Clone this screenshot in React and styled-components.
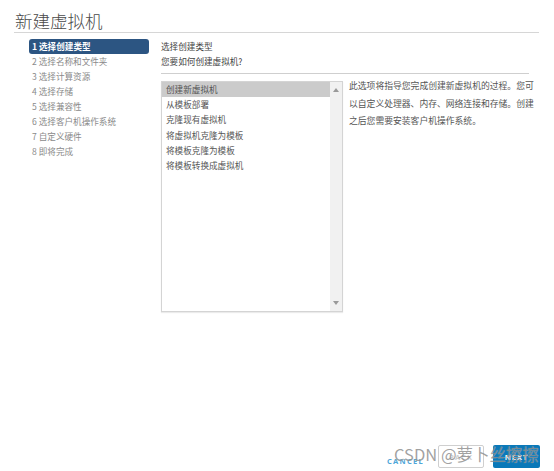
import React from "react";
import styled, { createGlobalStyle } from "styled-components";

const Global = createGlobalStyle`
  html, body { margin: 0; padding: 0; background: #fff; }
  body {
    font-family: "Noto Sans CJK SC", "Noto Sans", sans-serif;
    width: 554px; height: 471px; overflow: hidden;
  }
`;

const Page = styled.div`
  position: relative;
  width: 554px;
  height: 471px;
  box-sizing: border-box;
  padding: 9px 15px 0 14px;
  display: flex;
  flex-direction: column;
`;

const Title = styled.h1`
  margin: 0;
  padding: 0 0 0 1px;
  font-size: 17.5px;
  font-weight: 300;
  line-height: 23px;
  color: #4a4a4a;
  border-bottom: 1px solid #d6d6d6;
`;

const Body = styled.div`
  display: flex;
  padding-top: 6px;
  flex: 1;
`;

const Nav = styled.div`
  width: 120px;
  margin-left: 15px;
  display: flex;
  flex-direction: column;
`;

const NavItem = styled.div`
  height: 15px;
  line-height: 15px;
  padding-left: 3px;
  font-size: 8.6px;
  border-radius: 3px;
  color: ${(p) => (p.$active ? "#fff" : "#8a8a8a")};
  font-weight: ${(p) => (p.$active ? 700 : 400)};
  background: ${(p) => (p.$active ? "#2c5582" : "transparent")};
  white-space: nowrap;
`;

const Content = styled.div`
  margin-left: 12px;
  flex: 1;
  display: flex;
  flex-direction: column;
`;

const Header = styled.div`
  width: 368px;
  border-bottom: 1px solid #cfcfcf;
  padding-bottom: 4px;
`;

const HeadLine = styled.div`
  font-size: 8.6px;
  line-height: 15px;
  color: #444;
`;

const Row = styled.div`
  display: flex;
  margin-top: 7px;
`;

const ListBox = styled.div`
  width: 180px;
  height: 229px;
  border: 1px solid #d4d4d4;
  box-shadow: 0 1px 1px rgba(0, 0, 0, 0.08);
  display: flex;
`;

const Options = styled.div`
  flex: 1;
  display: flex;
  flex-direction: column;
`;

const Option = styled.div`
  height: 15.2px;
  line-height: 15.2px;
  padding-left: 4px;
  font-size: 8.6px;
  color: #555;
  background: ${(p) => (p.$selected ? "#cbcbcb" : "transparent")};
  white-space: nowrap;
`;

const Scroll = styled.div`
  width: 12px;
  background: #f1f1f1;
  display: flex;
  flex-direction: column;
  justify-content: space-between;
  align-items: center;
  padding: 6px 0 6px;
`;

const Description = styled.div`
  width: 190px;
  margin-left: 6px;
  margin-top: -4px;
  font-size: 8.8px;
  line-height: 17.5px;
  color: #555;
`;

const Footer = styled.div`
  position: absolute;
  right: 14px;
  bottom: 3px;
  display: flex;
  align-items: center;
  gap: 8px;
`;

const CancelBtn = styled.div`
  font-size: 7.5px;
  font-weight: 700;
  letter-spacing: 1.3px;
  color: #4fa6d9;
  padding: 8px 6px 0 0;
  font-family: "Noto Sans", sans-serif;
`;

const OutlineBtn = styled.div`
  width: 44px;
  height: 21px;
  border: 1px solid #cfcfcf;
  border-radius: 2px;
  display: flex;
  align-items: center;
  justify-content: center;
  font-size: 7.5px;
  font-weight: 700;
  letter-spacing: 1px;
  color: #d0d0d0;
  font-family: "Noto Sans", sans-serif;
  margin-right: 1px;
`;

const PrimaryBtn = styled.div`
  width: 47px;
  height: 23px;
  border-radius: 2px;
  background: #0a78b8;
  display: flex;
  align-items: center;
  justify-content: center;
  font-size: 7.5px;
  font-weight: 700;
  letter-spacing: 1px;
  color: #fff;
  font-family: "Noto Sans", sans-serif;
`;

const Watermark = styled.div`
  position: absolute;
  left: 394px;
  top: 442px;
  font-size: 16.5px;
  line-height: 24px;
  color: rgba(130, 130, 130, 0.75);
  text-shadow: 0 0 1px rgba(255, 255, 255, 0.4);
  font-family: "Noto Sans CJK SC", "Noto Sans", sans-serif;
  white-space: nowrap;
  pointer-events: none;
`;

const Arrow = ({ up }) => (
  <svg width="6" height="4" viewBox="0 0 6 4">
    <path d={up ? "M0 4 L3 0 L6 4 Z" : "M0 0 L6 0 L3 4 Z"} fill="#9a9a9a" />
  </svg>
);

const steps = [
  "1 选择创建类型",
  "2 选择名称和文件夹",
  "3 选择计算资源",
  "4 选择存储",
  "5 选择兼容性",
  "6 选择客户机操作系统",
  "7 自定义硬件",
  "8 即将完成",
];

const options = [
  "创建新虚拟机",
  "从模板部署",
  "克隆现有虚拟机",
  "将虚拟机克隆为模板",
  "将模板克隆为模板",
  "将模板转换成虚拟机",
];

export default function App() {
  return (
    <>
      <Global />
      <Page>
        <Title>新建虚拟机</Title>
        <Body>
          <Nav>
            {steps.map((s, i) => (
              <NavItem key={s} $active={i === 0}>
                {s}
              </NavItem>
            ))}
          </Nav>
          <Content>
            <Header>
              <HeadLine>选择创建类型</HeadLine>
              <HeadLine>您要如何创建虚拟机?</HeadLine>
            </Header>
            <Row>
              <ListBox>
                <Options>
                  {options.map((o, i) => (
                    <Option key={o} $selected={i === 0}>
                      {o}
                    </Option>
                  ))}
                </Options>
                <Scroll>
                  <Arrow up />
                  <Arrow />
                </Scroll>
              </ListBox>
              <Description>
                此选项将指导您完成创建新虚拟机的过程。您可以自定义处理器、内存、网络连接和存储。创建之后您需要安装客户机操作系统。
              </Description>
            </Row>
          </Content>
        </Body>
        <Footer>
          <CancelBtn>CANCEL</CancelBtn>
          <OutlineBtn>BACK</OutlineBtn>
          <PrimaryBtn>NEXT</PrimaryBtn>
        </Footer>
        <Watermark>CSDN @萝卜丝擦擦</Watermark>
      </Page>
    </>
  );
}
